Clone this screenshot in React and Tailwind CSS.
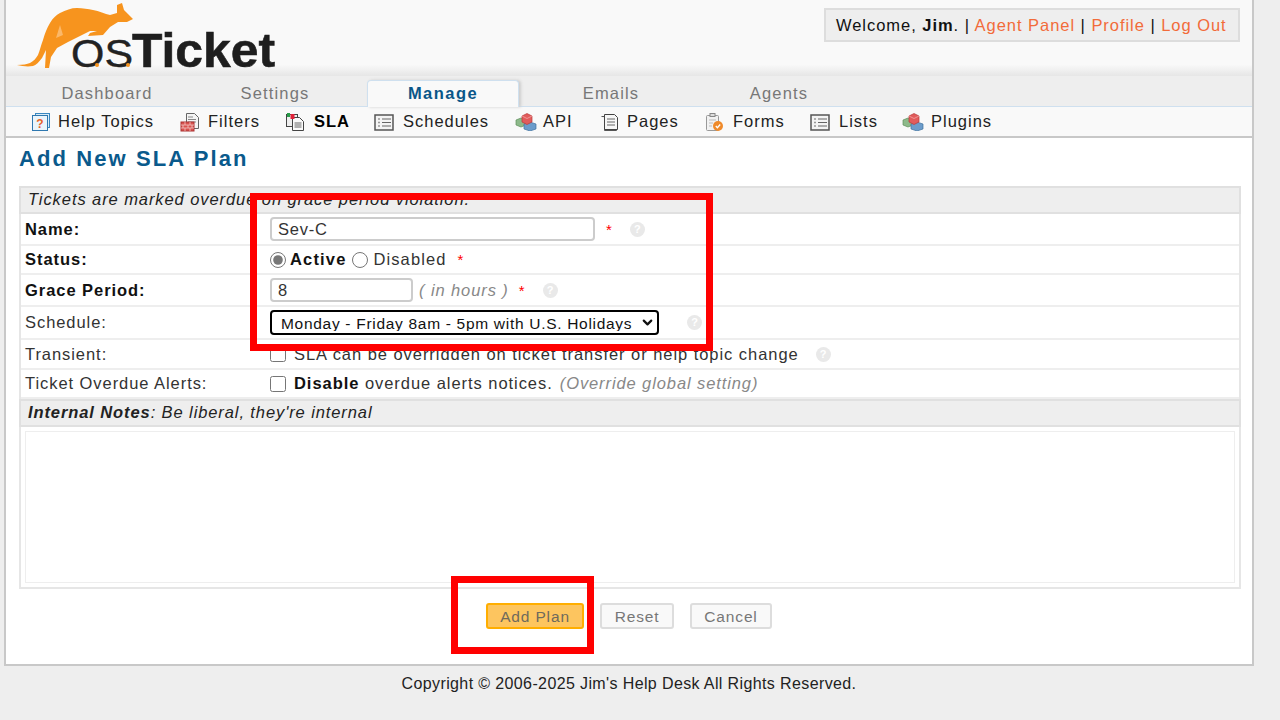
import React from "react";
import { ChevronDown } from "lucide-react";

const tabs = ["Dashboard", "Settings", "Manage", "Emails", "Agents"];

const HelpTopicIcon = () => (
  <svg width="20" height="20" viewBox="0 0 20 20">
    <rect x="4.500" y="1.500" width="14" height="14" fill="#d8ecf8" stroke="#3a87c0" />
    <rect x="1.500" y="3.500" width="15" height="15" fill="#eaf4fb" stroke="#2f78b0" />
    <text x="9" y="16" fontSize="12" fontWeight="700" textAnchor="middle" fill="#e8622a" fontFamily="Liberation Sans">?</text>
  </svg>
);

const FilterIcon = () => (
  <svg width="20" height="20" viewBox="0 0 20 20">
    <path d="M6.500 1.500h8l4 4v11h-12z" fill="#f4f4f4" stroke="#666" />
    <path d="M8 5h5M8 7.500h8M8 10h8" stroke="#888" />
    <rect x="1" y="10" width="13" height="9" fill="#d9534f" stroke="#a33" />
    <path d="M1 13h13M1 16h13M5 10v3M10 10v3M3 13v3M8 13v3M12 13v3M5 16v3M10 16v3" stroke="#f3c5c3" strokeWidth=".8" />
  </svg>
);

const SlaIcon = () => (
  <svg width="20" height="20" viewBox="0 0 20 20">
    <rect x="1.500" y="2.500" width="11" height="12" fill="#eee" stroke="#444" />
    <path d="M7.500 5.500h7l4 4v9h-11z" fill="#fafafa" stroke="#444" />
    <path d="M9.500 11h7M9.500 13h7M9.500 15h7" stroke="#666" />
    <rect x="2" y="1" width="3" height="4" fill="#2a9d4a" />
    <rect x="5.500" y="2" width="4" height="5" fill="#e0233a" />
  </svg>
);

const ListIcon = () => (
  <svg width="20" height="20" viewBox="0 0 20 20">
    <rect x="1" y="3" width="18" height="15" fill="#f4f4f4" stroke="#555" strokeWidth="1.500" />
    <path d="M4 7h2M4 10.500h2M4 14h2" stroke="#999" strokeWidth="1.600" />
    <path d="M8 7h9M8 10.500h9M8 14h9" stroke="#666" />
  </svg>
);

const CubesIcon = () => (
  <svg width="22" height="18" viewBox="0 0 22 18">
    <path d="M1 7l5-2 5 2v5l-5 2-5-2z" fill="#8db98a" stroke="#5f8f5c" strokeWidth=".7" />
    <path d="M9 11l6-2 6 2v5l-6 2-6-2z" fill="#6c9ccb" stroke="#41739f" strokeWidth=".7" />
    <path d="M7 3l5-2.500 5 2.500v6l-5 2.500-5-2.500z" fill="#e25c5c" stroke="#b93a3a" strokeWidth=".7" />
    <path d="M7 3l5 2.500 5-2.500" fill="none" stroke="#f3a3a3" strokeWidth=".8" />
  </svg>
);

const PageIcon = () => (
  <svg width="20" height="20" viewBox="0 0 20 20">
    <path d="M1.500 4.500h3v14h12v-1" fill="#eee" stroke="#555" />
    <path d="M4.500 2.500h10l3 3v12h-13z" fill="#f7f7f7" stroke="#444" />
    <path d="M7 7h8M7 10h8M7 13h8" stroke="#666" />
  </svg>
);

const FormIcon = () => (
  <svg width="20" height="20" viewBox="0 0 20 20">
    <rect x="2.500" y="3.500" width="12" height="15" rx="1" fill="#f2f2f2" stroke="#999" />
    <rect x="6" y="1.500" width="5" height="3" fill="#ddd" stroke="#888" />
    <path d="M5 8h7M5 11h4M5 14h3" stroke="#bbb" />
    <circle cx="14" cy="14" r="5" fill="#ef8a2a" />
    <path d="M11.800 14l1.600 1.700 2.800-3.200" fill="none" stroke="#fff" strokeWidth="1.300" />
  </svg>
);

const subnav = [
  { label: "Help Topics", icon: <HelpTopicIcon />, width: "w-[149px]", iconBox: "w-[27px]" },
  { label: "Filters", icon: <FilterIcon />, width: "w-[105px]", iconBox: "w-[28px]" },
  { label: "SLA", icon: <SlaIcon />, width: "w-[89px]", iconBox: "w-[29px]", active: true },
  { label: "Schedules", icon: <ListIcon />, width: "w-[141px]", iconBox: "w-[29px]" },
  { label: "API", icon: <CubesIcon />, width: "w-[85px]", iconBox: "w-[28px]" },
  { label: "Pages", icon: <PageIcon />, width: "w-[104px]", iconBox: "w-[27px]" },
  { label: "Forms", icon: <FormIcon />, width: "w-[106px]", iconBox: "w-[29px]" },
  { label: "Lists", icon: <ListIcon />, width: "w-[92px]", iconBox: "w-[29px]" },
  { label: "Plugins", icon: <CubesIcon />, width: "w-[100px]", iconBox: "w-[29px]" },
];

const Logo = () => (
  <svg width="266" height="84" viewBox="0 0 266 84" className="absolute left-[8px] top-0">
    <path
      d="M3 65C9 65 13 64 16 63C20 61 22 58 24 55C26 50 27 45 29 40C31 33 33 28 36 23C39 18 42 15 46 13C52 10 57 8 63 8C69 8 74 9 79 10C85 11 91 14 96 15L103 13L103 5L108 3L110 10L119 19L113 22L104 22L96 27L89 35L74 36L76 33L83 31L76 31L68 35L54 42L43 48L37 57L35 68L31 68L32 50L28 58C25 62 22 65 19 66C13 67 8 66 3 65Z"
      fill="#f7941e"
    />
    <path d="M46 25L49 35L42 38Z" fill="#fbb869" />
    <text x="57" y="67" fontSize="38" fontFamily="Liberation Sans" fill="#222" stroke="#222" strokeWidth=".4" textLength="62" lengthAdjust="spacingAndGlyphs">OS</text>
    <text x="118" y="67" fontSize="48" fontWeight="700" fontFamily="Liberation Sans" fill="#1e1e1e" stroke="#1e1e1e" strokeWidth=".6" textLength="143" lengthAdjust="spacingAndGlyphs">Ticket</text>
    <circle cx="83" cy="65" r="2" fill="#f7941e" />
    <circle cx="114" cy="65" r="2" fill="#f7941e" />
  </svg>
);

const Help = () => (
  <span className="flex h-[15px] w-[15px] items-center justify-center rounded-full bg-[#e9e9e9] text-[11px] font-bold leading-none text-white">
    ?
  </span>
);

const Req = () => <span className="text-[15px] text-[#f00]">*</span>;

const Row = ({ label, bold, height, children }) => (
  <div className={`flex items-center border-b-2 border-[#eee] ${height}`}>
    <div className={`w-[249px] pl-[4px] ${bold ? "font-bold text-[#111] tracking-[0.95px]" : "text-[#333] tracking-[0.94px]"}`}>{label}</div>
    <div className="flex flex-1 items-center">{children}</div>
  </div>
);

const SectionHead = ({ height, children }) => (
  <div className={`-mx-[2px] flex items-center border-2 border-[#e0e0e0] bg-[#eee] pb-[2px] pl-[7px] italic text-[#222] tracking-[0.92px] ${height}`}>{children}</div>
);

export default function App() {
  return (
    <div className="relative h-[720px] w-[1280px] overflow-hidden bg-[#eee] font-['Liberation_Sans',Arial,sans-serif] text-[16.5px] text-[#333]">
      <div className="ml-[4px] h-[666px] w-[1250px] border-x-2 border-b-2 border-[#c8c8c8] bg-white">
        <div className="relative h-[76px] bg-[linear-gradient(#f9f9f9_85%,#e6e6e6)]">
          <Logo />
          <div className="absolute right-[12px] top-[8px] flex h-[34px] w-[416px] items-center border-2 border-[#ddd] bg-[#eee] pl-[10px] text-[#111] tracking-[0.96px]">
            <span className="whitespace-nowrap">
              Welcome, <b>Jim</b>. | <a className="text-[#f26b3a]">Agent Panel</a> | <a className="text-[#f26b3a]">Profile</a> | <a className="text-[#f26b3a]">Log Out</a>
            </span>
          </div>
        </div>
        <div className="flex h-[31px] gap-4 border-b border-[#cfe0ef] bg-[#eee] pl-[25px]">
          {tabs.map((tab) =>
            tab === "Manage" ? (
              <div key={tab} className="mt-[4px] flex h-[27px] w-[152px] items-center justify-center rounded-t-[4px] border-x border-t border-[#cfe0ef] bg-[#f9f9f9] pb-[2px] font-bold tracking-[1.45px] text-[#0a5688] shadow-[2px_0_3px_#ccc]">
                {tab}
              </div>
            ) : (
              <div key={tab} className="flex w-[152px] items-center justify-center pt-[4px] tracking-[1.15px] text-[#777]">
                {tab}
              </div>
            )
          )}
        </div>
        <div className="flex h-[31px] items-center border-b-2 border-[#c8c8c8] bg-[#f9f9f9] pl-[25px] text-[#222]">
          {subnav.map((item) => (
            <div key={item.label} className={`flex shrink-0 items-center ${item.width}`}>
              <span className={`flex shrink-0 ${item.iconBox}`}>{item.icon}</span>
              <span className={item.active ? "font-bold tracking-[1px] text-black" : "tracking-[1px]"}>{item.label}</span>
            </div>
          ))}
        </div>
        <div className="pl-[13px] pr-[11px]">
          <h2 className="flex h-[40px] items-center text-[22px] font-bold tracking-[2.1px] text-[#0a5a8c]">Add New SLA Plan</h2>
          <div className="mt-[8px] flex h-[403px] flex-col border-2 border-t-0 border-[#e6e6e6]">
            <SectionHead height="h-[28px]">Tickets are marked overdue on grace period violation.</SectionHead>
            <Row label="Name:" bold height="h-[32px]">
              <input readOnly value="Sev-C" className="h-[24px] w-[325px] rounded-[4px] border-2 border-[#ccc] pl-[6px] tracking-[0.76px] text-[#333]" />
              <span className="ml-[11px]"><Req /></span>
              <span className="ml-[18px]"><Help /></span>
            </Row>
            <Row label="Status:" bold height="h-[29px]">
              <input readOnly type="radio" checked className="h-[16px] w-[16px] accent-[#777]" />
              <b className="ml-[4px] tracking-[1.16px] text-[#111]">Active</b>
              <input readOnly type="radio" checked={false} className="ml-[6px] h-[16px] w-[16px]" />
              <span className="ml-[5px] tracking-[1.1px]">Disabled</span>
              <span className="ml-[11px]"><Req /></span>
            </Row>
            <Row label="Grace Period:" bold height="h-[32px]">
              <input readOnly value="8" className="h-[24px] w-[143px] rounded-[4px] border-2 border-[#ccc] pl-[6px]" />
              <i className="ml-[6px] tracking-[0.9px] text-[#888]">( in hours )</i>
              <span className="ml-[10px]"><Req /></span>
              <span className="ml-[18px]"><Help /></span>
            </Row>
            <Row label="Schedule:" height="h-[33px]">
              <div className="relative">
                <select className="h-[25px] w-[389px] appearance-none rounded-[4px] border-2 border-black pb-[2px] pl-[9px] text-[15.5px] tracking-[0.7px] text-[#111]">
                  <option>Monday - Friday 8am - 5pm with U.S. Holidays</option>
                </select>
                <ChevronDown size={15} strokeWidth={3.5} className="absolute right-[4px] top-[5px] text-[#111]" />
              </div>
              <span className="ml-[28px]"><Help /></span>
            </Row>
            <Row label="Transient:" height="h-[30px]">
              <input readOnly type="checkbox" className="h-[16px] w-[16px]" />
              <span className="ml-[8px] whitespace-nowrap tracking-[0.95px]">SLA can be overridden on ticket transfer or help topic change</span>
              <span className="ml-[17px]"><Help /></span>
            </Row>
            <Row label="Ticket Overdue Alerts:" height="h-[29px]">
              <input readOnly type="checkbox" className="h-[16px] w-[16px]" />
              <span className="ml-[8px] whitespace-nowrap tracking-[0.95px]"><b className="text-[#111]">Disable</b> overdue alerts notices.</span>
              <i className="ml-[7px] whitespace-nowrap tracking-[0.9px] text-[#888]">(Override global setting)</i>
            </Row>
            <SectionHead height="h-[28px]">
              <span className="tracking-[0.9px]"><b>Internal Notes</b>: Be liberal, they're internal</span>
            </SectionHead>
            <div className="flex-1 p-[4px]">
              <div className="h-full border border-[#eee]"></div>
            </div>
          </div>
          <div className="mt-[14px] flex pl-[467px] text-[15.5px]">
            <button className="h-[26px] w-[98px] rounded-[3px] border-2 border-[#ffae00] bg-[#fdc55f] pb-[2px] tracking-[0.85px] text-[#6f6a5c]">Add Plan</button>
            <button className="ml-[16px] h-[26px] w-[74px] rounded-[3px] border-2 border-[#ddd] bg-[#f9f9f9] pb-[2px] tracking-[0.85px] text-[#777]">Reset</button>
            <button className="ml-[16px] h-[26px] w-[82px] rounded-[3px] border-2 border-[#ddd] bg-[#f9f9f9] pb-[2px] tracking-[0.85px] text-[#777]">Cancel</button>
          </div>
        </div>
      </div>
      <div className="w-[1258px] pt-[6px] text-center text-[16px] tracking-[0.38px] text-[#222]">Copyright © 2006-2025 Jim's Help Desk All Rights Reserved.</div>
      <div className="absolute left-[250px] top-[193px] h-[158px] w-[463px] border-[7px] border-[#f00]"></div>
      <div className="absolute left-[451px] top-[576px] h-[78px] w-[143px] border-[7px] border-[#f00]"></div>
    </div>
  );
}
